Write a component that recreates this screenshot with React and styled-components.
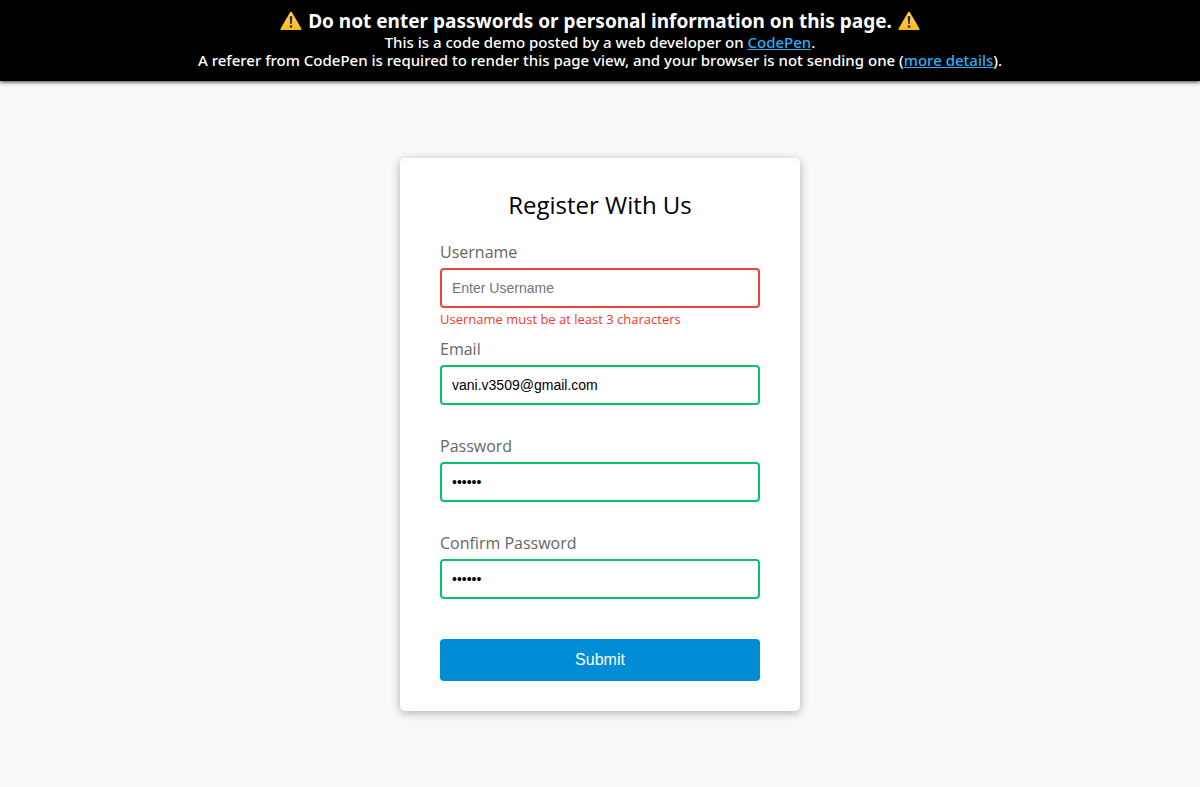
import React from "react";
import styled, { createGlobalStyle } from "styled-components";

const GlobalStyle = createGlobalStyle`
  * { box-sizing: border-box; }
  body {
    margin: 0;
    background: #f8f9fb;
    font-family: "Open Sans", sans-serif;
  }
`;

const Page = styled.div`
  display: flex;
  flex-direction: column;
  min-height: 100vh;
`;

const Banner = styled.header`
  padding: 9px 16px 12px;
  background: #000;
  color: #fff;
  font-family: "Noto Sans", "Lucida Grande", sans-serif;
  font-size: 15px;
  font-weight: 500;
  line-height: 18px;
  text-align: center;
  box-shadow: 0 1px 4px rgba(0, 0, 0, 0.8);
`;

const BannerTitle = styled.strong`
  display: flex;
  align-items: center;
  justify-content: center;
  gap: 6px;
  font-size: 19px;
  font-weight: 700;
  line-height: 24px;
`;

const BannerText = styled.p`
  margin: 0;
`;

const BannerLink = styled.a`
  color: #2eaef6;
  text-decoration: underline;
`;

const Main = styled.main`
  flex: 1;
  display: flex;
  align-items: center;
  justify-content: center;
  padding: 32px 16px;
`;

const Form = styled.form`
  width: 100%;
  max-width: 400px;
  padding: 30px 40px;
  background: #fff;
  border-radius: 5px;
  box-shadow: 0 2px 10px rgba(0, 0, 0, 0.3);
`;

const Title = styled.h1`
  margin: 0 0 20px;
  color: #000;
  font-size: 24px;
  font-weight: 400;
  line-height: 33px;
  text-align: center;
`;

const Field = styled.div`
  margin-bottom: 8px;
`;

const Label = styled.label`
  display: block;
  margin-bottom: 5px;
  color: #666;
  font-size: 16px;
  line-height: 22px;
`;

const Input = styled.input`
  display: block;
  width: 100%;
  height: 40px;
  padding: 10px;
  border: 2px solid ${(p) => (p.$invalid ? "#f04337" : "#05c46b")};
  border-radius: 4px;
  background: #fff;
  color: #000;
  font-family: "Liberation Sans", Arial, sans-serif;
  font-size: 14px;

  &::placeholder { color: #757575; }
  &:focus { outline: 0; border-color: #777; }
`;

const Message = styled.small`
  display: block;
  min-height: 22px;
  color: #ee3a2e;
  font-size: 13px;
  line-height: 22px;
`;

const SubmitButton = styled.button`
  display: block;
  width: 100%;
  margin-top: 18px;
  padding: 10px;
  border: 0;
  border-radius: 4px;
  background: #008dd5;
  color: #fff;
  font-family: "Liberation Sans", Arial, sans-serif;
  font-size: 16px;
  line-height: 22px;
  cursor: pointer;
`;

function WarningIcon() {
  return (
    <svg width="22" height="20" viewBox="0 0 22 20" aria-hidden="true">
      <defs>
        <linearGradient id="warning" x1="0" y1="0" x2="0" y2="1">
          <stop offset="0" stopColor="#ffd747" />
          <stop offset="1" stopColor="#fcb827" />
        </linearGradient>
      </defs>
      <path d="M10 1.6Q11-.1 12 1.6L21.4 17.6Q22 19 20.7 19H1.3Q0 19 .6 17.6Z" fill="url(#warning)" />
      <path d="M9.7 5.8Q9.7 4.9 11 4.9T12.3 5.8L11.8 12.5Q11.7 13.1 11 13.1T10.2 12.5Z" fill="#332a18" />
      <circle cx="11" cy="15.6" r="1.3" fill="#332a18" />
    </svg>
  );
}

const fields = [
  {
    id: "username",
    label: "Username",
    type: "text",
    placeholder: "Enter Username",
    error: "Username must be at least 3 characters",
  },
  { id: "email", label: "Email", type: "text", value: "vani.v3509@gmail.com" },
  { id: "password", label: "Password", type: "password", value: "secret" },
  { id: "password2", label: "Confirm Password", type: "password", value: "secret" },
];

export default function App() {
  return (
    <Page>
      <GlobalStyle />
      <Banner>
        <BannerTitle>
          <WarningIcon />
          Do not enter passwords or personal information on this page.
          <WarningIcon />
        </BannerTitle>
        <BannerText>
          This is a code demo posted by a web developer on <BannerLink href="#codepen">CodePen</BannerLink>.
        </BannerText>
        <BannerText>
          A referer from CodePen is required to render this page view, and your browser is not sending one (
          <BannerLink href="#details">more details</BannerLink>).
        </BannerText>
      </Banner>
      <Main>
        <Form onSubmit={(e) => e.preventDefault()} noValidate>
          <Title>Register With Us</Title>
          {fields.map((f) => (
            <Field key={f.id}>
              <Label htmlFor={f.id}>{f.label}</Label>
              <Input
                id={f.id}
                type={f.type}
                placeholder={f.placeholder}
                defaultValue={f.value}
                $invalid={Boolean(f.error)}
                aria-invalid={Boolean(f.error)}
                aria-describedby={`${f.id}-message`}
              />
              <Message id={`${f.id}-message`}>{f.error}</Message>
            </Field>
          ))}
          <SubmitButton type="submit">Submit</SubmitButton>
        </Form>
      </Main>
    </Page>
  );
}
